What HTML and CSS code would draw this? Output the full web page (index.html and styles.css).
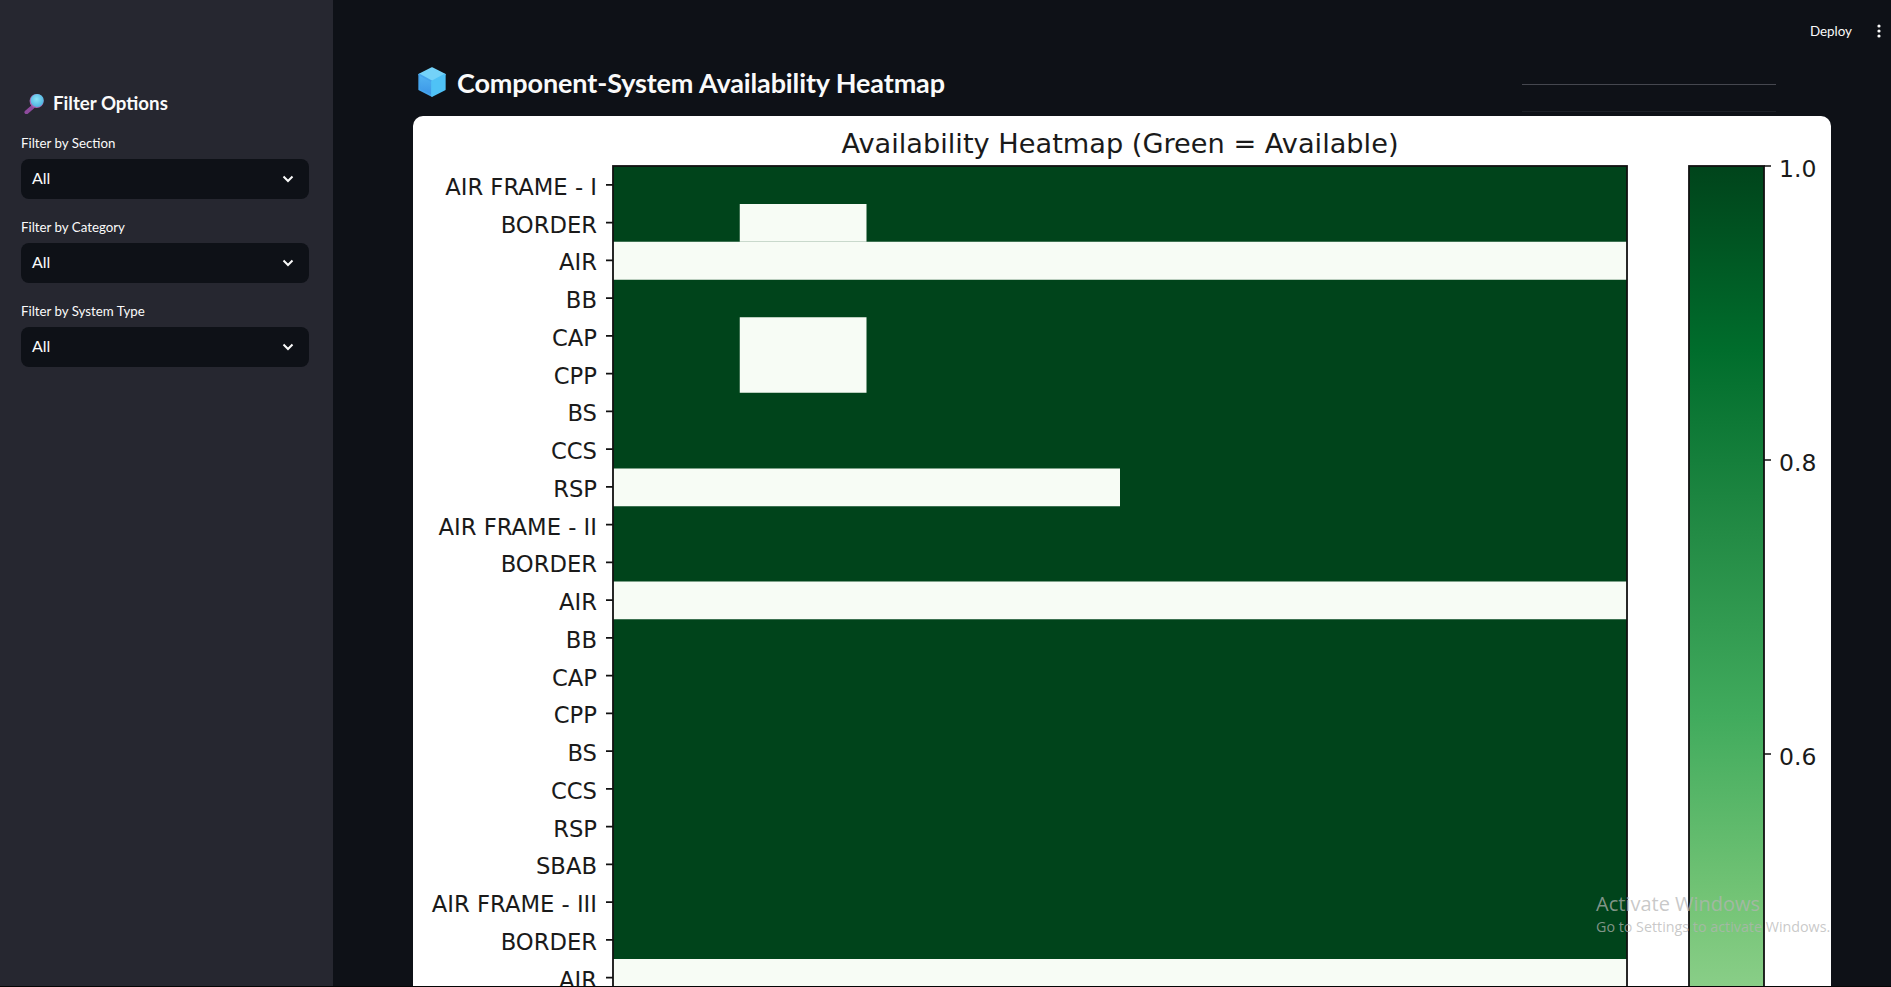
FILE: index.html
```html
<!DOCTYPE html>
<html lang="en">
<head>
    <meta charset="UTF-8">
    <meta name="viewport" content="width=device-width, initial-scale=1.0">
    <title>Component-System Availability Heatmap</title>
    <link rel="stylesheet" href="styles.css">
</head>
<body>
    <div class="app">
        <!-- Sidebar filters -->
        <aside class="sidebar">
            <h2 class="sidebar-title">
                <svg class="search-icon" viewBox="0 0 22 22" aria-hidden="true">
                    <defs>
                        <radialGradient id="lens" cx="0.45" cy="0.4" r="0.6">
                            <stop offset="0" stop-color="#8be3f7"/>
                            <stop offset="1" stop-color="#4fb4e0"/>
                        </radialGradient>
                    </defs>
                    <path d="M2.6 20.2 L9 14.6" stroke="#8d4a9c" stroke-width="4.2" stroke-linecap="round"/>
                    <circle cx="13.2" cy="8.4" r="7.4" fill="#a865b5"/>
                    <circle cx="13.8" cy="7.8" r="6.8" fill="url(#lens)"/>
                </svg>
                Filter Options
            </h2>

            <div class="filter">
                <label class="filter-label">Filter by Section</label>
                <div class="select">
                    <span>All</span>
                    <svg class="chevron" viewBox="0 0 12 8" aria-hidden="true"><path d="M1.5 1.5 L6 6 L10.5 1.5"/></svg>
                </div>
            </div>
            <div class="filter">
                <label class="filter-label">Filter by Category</label>
                <div class="select">
                    <span>All</span>
                    <svg class="chevron" viewBox="0 0 12 8" aria-hidden="true"><path d="M1.5 1.5 L6 6 L10.5 1.5"/></svg>
                </div>
            </div>
            <div class="filter">
                <label class="filter-label">Filter by System Type</label>
                <div class="select">
                    <span>All</span>
                    <svg class="chevron" viewBox="0 0 12 8" aria-hidden="true"><path d="M1.5 1.5 L6 6 L10.5 1.5"/></svg>
                </div>
            </div>
        </aside>

        <main class="main">
            <header class="topbar">
                <span class="deploy">Deploy</span>
                <svg class="menu-dots" viewBox="0 0 6 14" aria-hidden="true">
                    <circle cx="3" cy="2" r="1.6"/>
                    <circle cx="3" cy="7" r="1.6"/>
                    <circle cx="3" cy="12" r="1.6"/>
                </svg>
            </header>

            <div class="title-row">
                <h1 class="page-title">
                    <svg class="cube-icon" viewBox="0 0 30 30" aria-hidden="true">
                        <defs>
                            <linearGradient id="cube-left" x1="0" y1="0" x2="0" y2="1">
                                <stop offset="0" stop-color="#52b4f2"/>
                                <stop offset="1" stop-color="#3a94e6"/>
                            </linearGradient>
                        </defs>
                        <g stroke-linejoin="round" stroke-width="1.6">
                            <path d="M15 2 L27 8 L15 14.5 L3 8 Z" fill="#74d2f8" stroke="#74d2f8"/>
                            <path d="M3 8 L15 14.5 L15 28 L3 22 Z" fill="url(#cube-left)" stroke="#45a4ec"/>
                            <path d="M27 8 L15 14.5 L15 28 L27 22 Z" fill="#4fc2f6" stroke="#4fc2f6"/>
                        </g>
                    </svg>
                    Component-System Availability Heatmap
                </h1>
                <div class="ghost-lines"></div>
            </div>

            <div class="chart-card">
                <svg class="chart" width="1418" height="870" viewBox="0 0 1418 870">
                    <defs>
                        <linearGradient id="greens" gradientUnits="userSpaceOnUse" x1="0" y1="50" x2="0" y2="1520">
                            <stop offset="0" stop-color="#00441b"/>
                            <stop offset="0.125" stop-color="#006d2c"/>
                            <stop offset="0.25" stop-color="#238b45"/>
                            <stop offset="0.375" stop-color="#41ab5d"/>
                            <stop offset="0.5" stop-color="#74c476"/>
                            <stop offset="0.625" stop-color="#a1d99b"/>
                        </linearGradient>
                    </defs>

                    <text class="chart-title" x="707" y="27">Availability Heatmap (Green = Available)</text>

                    <!-- heatmap cells -->
                    <rect class="cell-on" x="200" y="50" width="1014" height="830"/>
                    <rect class="cell-off" x="326.75" y="88" width="126.75" height="37.75"/>
                    <rect class="cell-off" x="200" y="125.75" width="1014" height="38"/>
                    <rect class="cell-off" x="326.75" y="201.25" width="126.75" height="75.5"/>
                    <rect class="cell-off" x="200" y="352.5" width="507" height="37.75"/>
                    <rect class="cell-off" x="200" y="465.5" width="1014" height="37.75"/>
                    <rect class="cell-off" x="200" y="843" width="1014" height="37.75"/>
                    <rect class="frame" x="200" y="50" width="1014" height="830"/>

                    <!-- row labels -->
                    <g class="row-labels">
                        <text x="184" y="71">AIR FRAME - I</text>
                        <text x="184" y="109">BORDER</text>
                        <text x="184" y="146">AIR</text>
                        <text x="184" y="184">BB</text>
                        <text x="184" y="222">CAP</text>
                        <text x="184" y="260">CPP</text>
                        <text x="184" y="297">BS</text>
                        <text x="184" y="335">CCS</text>
                        <text x="184" y="373">RSP</text>
                        <text x="184" y="411">AIR FRAME - II</text>
                        <text x="184" y="448">BORDER</text>
                        <text x="184" y="486">AIR</text>
                        <text x="184" y="524">BB</text>
                        <text x="184" y="562">CAP</text>
                        <text x="184" y="599">CPP</text>
                        <text x="184" y="637">BS</text>
                        <text x="184" y="675">CCS</text>
                        <text x="184" y="713">RSP</text>
                        <text x="184" y="750">SBAB</text>
                        <text x="184" y="788">AIR FRAME - III</text>
                        <text x="184" y="826">BORDER</text>
                        <text x="184" y="864">AIR</text>
                    </g>
                    <path class="ticks" d="M193 68.9h7M193 106.6h7M193 144.4h7M193 182.1h7M193 219.9h7M193 257.6h7M193 295.4h7M193 333.1h7M193 370.9h7M193 408.6h7M193 446.4h7M193 484.1h7M193 521.9h7M193 559.6h7M193 597.4h7M193 635.1h7M193 672.9h7M193 710.6h7M193 748.4h7M193 786.1h7M193 823.9h7M193 861.6h7"/>

                    <!-- colorbar -->
                    <rect x="1276" y="50" width="75" height="830" fill="url(#greens)"/>
                    <rect class="frame" x="1276" y="50" width="75" height="830"/>
                    <path class="ticks" d="M1351 50h7M1351 344h7M1351 638h7"/>
                    <g class="bar-labels">
                        <text x="1366" y="53">1.0</text>
                        <text x="1366" y="347">0.8</text>
                        <text x="1366" y="641">0.6</text>
                    </g>
                </svg>
            </div>
        </main>
    </div>

    <!-- Windows watermark over the page -->
    <div class="watermark">
        <div class="watermark-big">Activate Windows</div>
        <div class="watermark-small">Go to Settings to activate Windows.</div>
    </div>
</body>
</html>
```

FILE: styles.css
```css
html, body {
    margin: 0;
    height: 100%;
    overflow: hidden;
    background-color: #050505;
}

body {
    font-family: "Lato", "Noto Sans", sans-serif;
    color: #fafafa;
}

.app {
    display: flex;
    height: 986px;
    overflow: hidden;
}

/* Sidebar */
.sidebar {
    width: 333px;
    flex-shrink: 0;
    box-sizing: border-box;
    padding: 88px 24px 0 21px;
    background-color: #262730;
}

.sidebar-title {
    display: flex;
    align-items: center;
    gap: 8px;
    margin: 0 0 15px 3px;
    height: 30px;
    font-size: 18.7px;
    font-weight: 700;
    color: #fafafa;
}

.search-icon {
    width: 21px;
    height: 21px;
}

.filter {
    margin-bottom: 18px;
}

.filter-label {
    display: block;
    height: 26px;
    line-height: 20px;
    font-size: 13.3px;
    color: #fafafa;
}

.select {
    display: flex;
    align-items: center;
    justify-content: space-between;
    height: 40px;
    padding: 0 15px 0 11px;
    border-radius: 8px;
    background-color: #0e1117;
    font-size: 16px;
    line-height: 38px;
}

.select span {
    margin-top: -2px;
}

.chevron {
    width: 12px;
    height: 8px;
    fill: none;
    stroke: #fafafa;
    stroke-width: 2;
}

/* Main area */
.main {
    flex: 1;
    min-width: 0;
    padding-right: 60px;
    background-color: #0e1117;
}

.topbar {
    display: flex;
    align-items: center;
    justify-content: flex-end;
    gap: 24px;
    height: 62px;
    margin-right: -51px;
    font-size: 13.4px;
}

.menu-dots {
    width: 6px;
    height: 14px;
    fill: #fafafa;
}

.title-row {
    display: flex;
    justify-content: space-between;
    height: 54px;
    margin-left: 80px;
}

.page-title {
    display: flex;
    align-items: center;
    gap: 9px;
    margin: 1px 0 0 3px;
    height: 38px;
    font-size: 27px;
    letter-spacing: -0.12px;
    font-weight: 700;
    color: #fafafa;
}

.cube-icon {
    width: 32px;
    height: 32px;
}

.ghost-lines {
    box-sizing: border-box;
    width: 254px;
    height: 28px;
    margin: 22px 55px 0 0;
    border-top: 1px solid #45474f;
    border-bottom: 1px solid #1d2027;
}

.chart-card {
    margin-left: 80px;
    height: 900px;
    overflow: hidden;
    border-radius: 10px 10px 0 0;
    background-color: #fff;
}

.chart {
    display: block;
}

/* Matplotlib figure */
.chart text {
    font-family: "DejaVu Sans", sans-serif;
    fill: #1a1a1a;
}

.chart .chart-title {
    font-size: 27.2px;
    text-anchor: middle;
    dominant-baseline: central;
}

.cell-on {
    fill: #00441b;
}

.cell-off {
    fill: #f7fcf5;
}

.frame {
    fill: none;
    stroke: #111;
    stroke-width: 1.8;
}

.ticks {
    fill: none;
    stroke: #111;
    stroke-width: 1.6;
}

.row-labels text {
    font-size: 22.7px;
    text-anchor: end;
    dominant-baseline: central;
}

.bar-labels text {
    font-size: 23.5px;
    dominant-baseline: central;
}

/* Watermark */
.watermark {
    position: absolute;
    left: 1596px;
    top: 890px;
    font-family: "Open Sans", "Noto Sans", sans-serif;
    color: rgba(180, 180, 180, 0.73);
    white-space: nowrap;
}

.watermark-big {
    font-size: 20px;
    line-height: 27px;
}

.watermark-small {
    font-size: 14.3px;
    line-height: 20px;
}
```
